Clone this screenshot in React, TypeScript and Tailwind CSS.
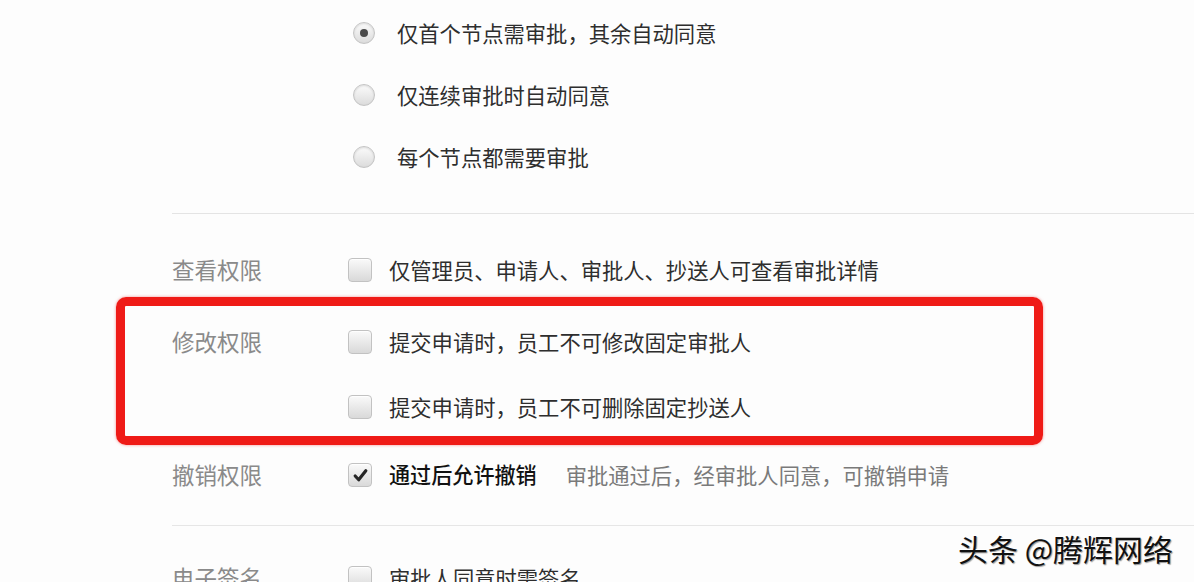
import React from "react";

const font = "font-['Microsoft_YaHei','Noto_Sans_CJK_SC',sans-serif]";

function Radio({ checked, label }: { checked?: boolean; label: string }) {
  return (
    <div className="flex h-[62px] items-center">
      <span className="flex h-[22px] w-[22px] items-center justify-center rounded-full border border-[#c4c4c4] bg-gradient-to-b from-[#fbfbfb] to-[#dcdcdc] shadow-[inset_0_1px_2px_rgba(0,0,0,0.12)]">
        {checked && <span className="h-[8px] w-[8px] rounded-full bg-[#4a4a4a]" />}
      </span>
      <span className="ml-[22px] text-[21.3px] text-[#2e2e2e]">{label}</span>
    </div>
  );
}

function Checkbox({ checked }: { checked?: boolean }) {
  return (
    <span className="flex h-[24px] w-[24px] shrink-0 items-center justify-center rounded-[4px] border border-[#c2c2c2] bg-gradient-to-b from-[#fafafa] to-[#d9d9d9] shadow-[inset_0_1px_1px_rgba(255,255,255,0.8)]">
      {checked && (
        <svg viewBox="0 0 16 16" className="h-[17px] w-[17px]">
          <path d="M3 8.5 L6.3 12 L13 3.5" fill="none" stroke="#262626" strokeWidth="3" strokeLinecap="round" strokeLinejoin="round" />
        </svg>
      )}
    </span>
  );
}

function Row({ label, children, className }: { label?: string; children: React.ReactNode; className?: string }) {
  return (
    <div className={`flex h-[40px] items-center ${className ?? ""}`}>
      <div className="w-[176px] text-[22.5px] text-[#8a8a8a]">{label}</div>
      {children}
    </div>
  );
}

export default function App() {
  return (
    <div className={`relative h-[582px] w-[1194px] overflow-hidden bg-[#fdfdfd] ${font}`}>
      {/* 审批方式 */}
      <div className="pl-[353px] pt-[2px]">
        <Radio checked label="仅首个节点需审批，其余自动同意" />
        <Radio label="仅连续审批时自动同意" />
        <Radio label="每个节点都需要审批" />
      </div>

      <div className="ml-[172px] mt-[25px] h-px bg-[#e4e4e4]" />

      <div className="pl-[172px]">
        <Row label="查看权限" className="mt-[36px]">
          <Checkbox />
          <span className="ml-[17px] text-[21.3px] text-[#2e2e2e]">仅管理员、申请人、审批人、抄送人可查看审批详情</span>
        </Row>
        <Row label="修改权限" className="mt-[32px]">
          <Checkbox />
          <span className="ml-[17px] text-[21.3px] text-[#2e2e2e]">提交申请时，员工不可修改固定审批人</span>
        </Row>
        <Row className="mt-[25px]">
          <Checkbox />
          <span className="ml-[17px] text-[21.3px] text-[#2e2e2e]">提交申请时，员工不可删除固定抄送人</span>
        </Row>
        <Row label="撤销权限" className="mt-[28px]">
          <Checkbox checked />
          <span className="ml-[17px] text-[21.1px] font-medium text-[#111]">通过后允许撤销</span>
          <span className="ml-[29px] text-[21.3px] text-[#7a7a7a]">审批通过后，经审批人同意，可撤销申请</span>
        </Row>
      </div>

      <div className="ml-[172px] mt-[30px] h-px bg-[#e6e6e6]" />

      <div className="pl-[172px]">
        <Row label="电子签名" className="mt-[32px]">
          <Checkbox />
          <span className="ml-[17px] text-[21.3px] text-[#2e2e2e]">审批人同意时需签名</span>
        </Row>
      </div>

      {/* 标注框 */}
      <div className="pointer-events-none absolute left-[116px] top-[297px] h-[148px] w-[927px] rounded-[10px] border-[9px] border-[#ef1b17] shadow-[0_0_3px_rgba(239,27,23,0.5)]" />

      {/* 水印 */}
      <div className="absolute left-[958px] top-[530px] text-[30px] leading-[36px] text-[#111] [text-shadow:-1px_-1px_0_#fff,1px_1px_1px_rgba(0,0,0,0.4)]">
        头条 @腾辉网络
      </div>
    </div>
  );
}
